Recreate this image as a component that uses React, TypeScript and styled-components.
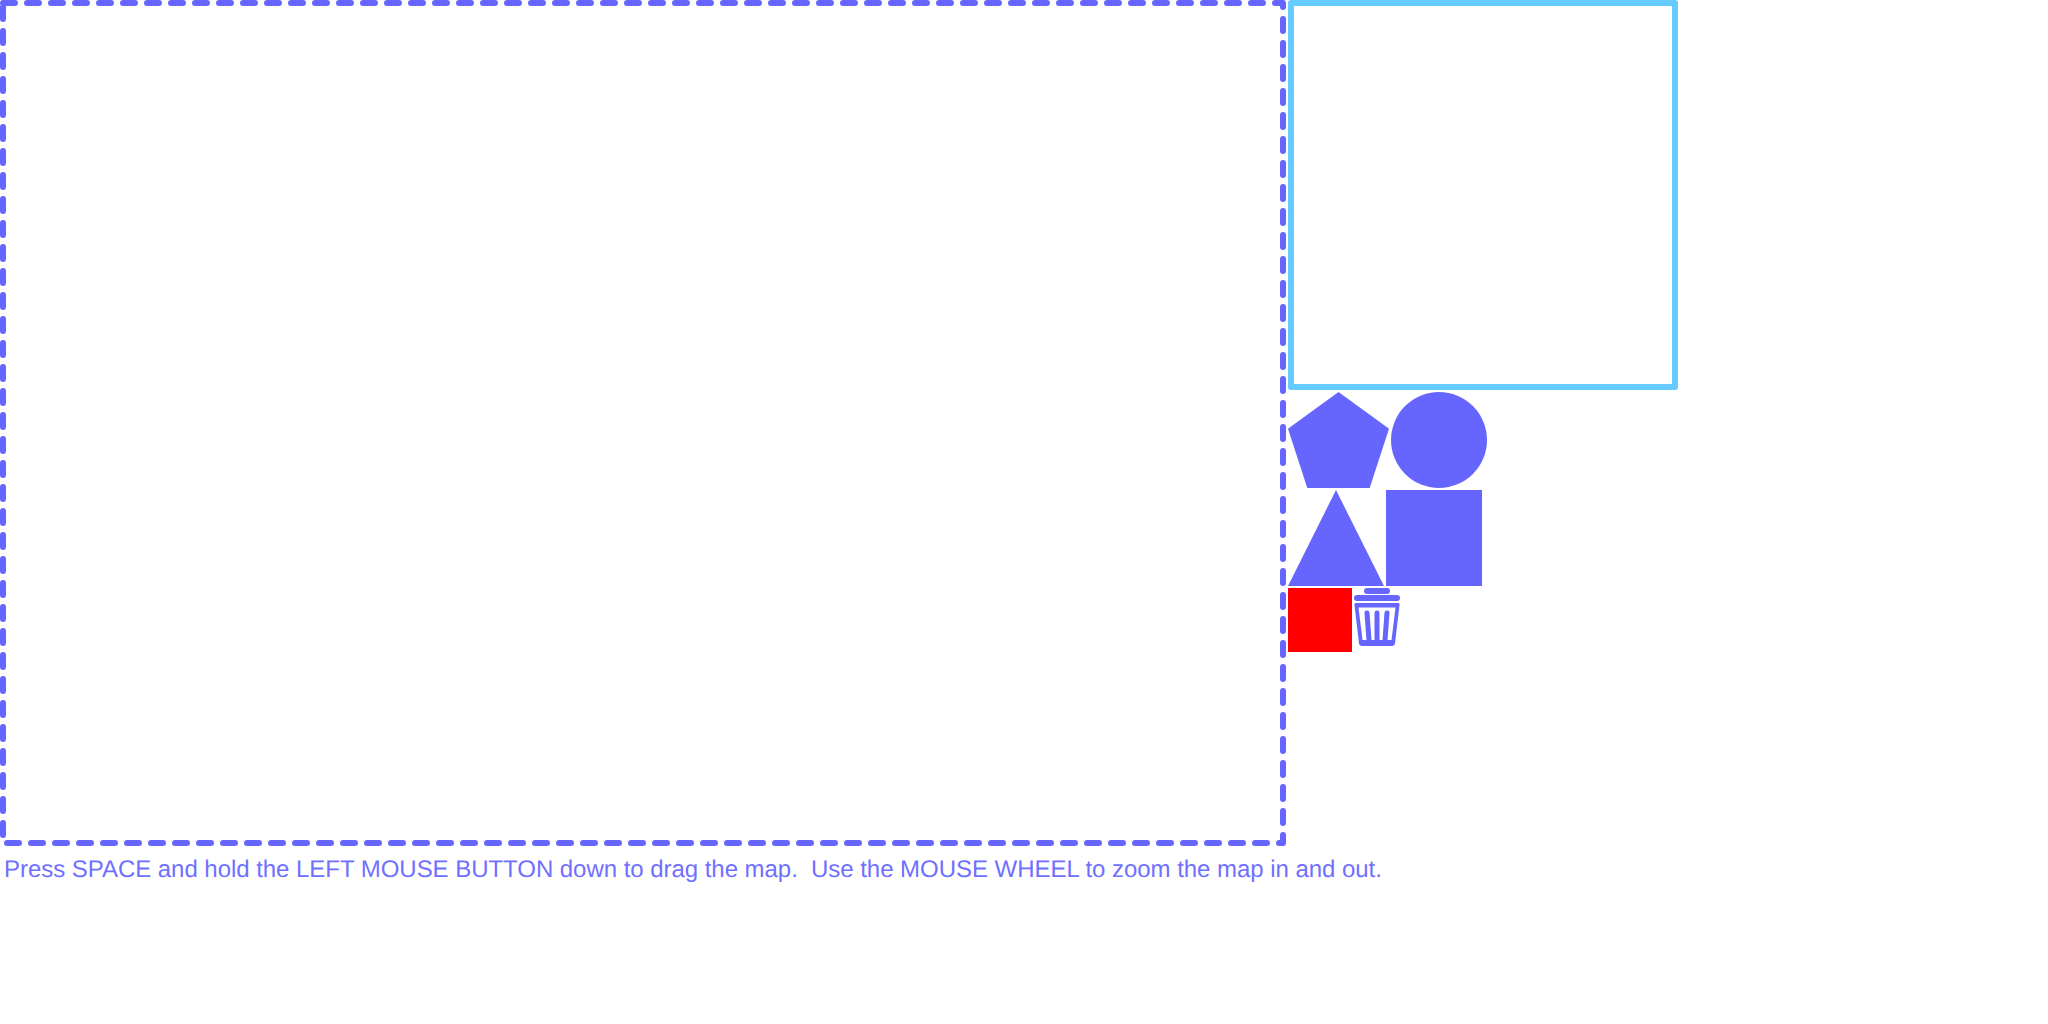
import React from "react";
import styled, { createGlobalStyle } from "styled-components";

const Page = createGlobalStyle`
  html, body { margin: 0; padding: 0; background: #fff; }
  svg { display: block; }
`;

const Editor = styled.div`
  display: flex;
  flex-direction: column;
  width: 2048px;
  height: 1024px;
  overflow: hidden;
`;

const Board = styled.div`
  display: flex;
  align-items: flex-start;
  height: 846px;
`;

const MapFrame = styled.div`
  flex: 0 0 1288px;
  height: 846px;
`;

const Side = styled.div`
  display: flex;
  flex-direction: column;
  gap: 2px;
`;

const PaletteRow = styled.div`
  display: flex;
  gap: 2px;
`;

const Hint = styled.p`
  margin: 10px 0 0 4px;
  font-family: "Liberation Sans", Arial, sans-serif;
  font-size: 24px;
  line-height: 28px;
  letter-spacing: -0.04px;
  text-rendering: geometricPrecision;
  color: #7070ff;
  white-space: pre;
`;

const ink = "#6666ff";

const TrashIcon = () => (
  <svg width="46" height="58" viewBox="0 0 46 58" fill={ink}>
    <rect x="10" y="0" width="26" height="6" rx="3" />
    <rect x="0" y="7" width="46" height="6" rx="3" />
    <path
      fillRule="evenodd"
      d="M2 15H44A1.500 1.500 0 0 1 45.500 17L41 55.500A3 3 0 0 1 38.500 58H7.500A3 3 0 0 1 5 55.500L0.500 17A1.500 1.500 0 0 1 2 15ZM4.500 19.500L8.500 52H37.500L41.500 19.500Z"
    />
    <g stroke={ink} strokeLinecap="round" fill="none" strokeWidth="5">
      <line x1="13" y1="25" x2="15" y2="52" />
      <line x1="23" y1="25" x2="23" y2="52" />
      <line x1="33" y1="25" x2="31" y2="52" />
    </g>
  </svg>
);

export default function App() {
  return (
    <Editor>
      <Page />
      <Board>
        <MapFrame>
          <svg width="1288" height="846">
            <rect x="3" y="3" width="1280" height="840" fill="none" stroke={ink} strokeWidth="6" strokeDasharray="12 12" strokeLinecap="round" strokeLinejoin="round" />
          </svg>
        </MapFrame>
        <Side>
          <svg width="390" height="390">
            <rect x="3" y="3" width="384" height="384" fill="none" stroke="#66ccff" strokeWidth="6" strokeLinejoin="round" />
          </svg>
          <PaletteRow>
            <svg width="101" height="96"><polygon points="50.500,0 101,36.700 81.700,96 19.300,96 0,36.700" fill={ink} /></svg>
            <svg width="96" height="96"><circle cx="48" cy="48" r="48" fill={ink} /></svg>
          </PaletteRow>
          <PaletteRow>
            <svg width="96" height="96"><polygon points="48,0 96,96 0,96" fill={ink} /></svg>
            <svg width="96" height="96"><rect width="96" height="96" fill={ink} /></svg>
          </PaletteRow>
          <PaletteRow>
            <svg width="64" height="64"><rect width="64" height="64" fill="#ff0000" /></svg>
            <TrashIcon />
          </PaletteRow>
        </Side>
      </Board>
      <Hint>Press SPACE and hold the LEFT MOUSE BUTTON down to drag the map.  Use the MOUSE WHEEL to zoom the map in and out.</Hint>
    </Editor>
  );
}
